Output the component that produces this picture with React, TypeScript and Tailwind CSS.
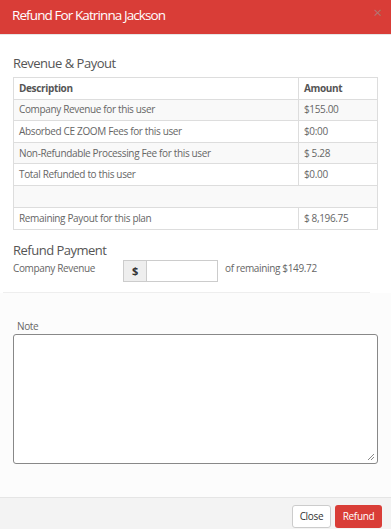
import React from 'react';

const rows: { label: string; amount: string; span?: boolean }[] = [
  { label: 'Company Revenue for this user', amount: '$155.00' },
  { label: 'Absorbed CE ZOOM Fees for this user', amount: '$0:00' },
  { label: 'Non-Refundable Processing Fee for this user', amount: '$ 5.28' },
  { label: 'Total Refunded to this user', amount: '$0.00' },
  { label: '', amount: '', span: true },
  { label: 'Remaining Payout for this plan', amount: '$ 8,196.75' },
];

export default function App() {
  return (
    <div className="w-[391px] h-[529px] flex flex-col bg-white overflow-hidden" style={{ fontFamily: '"Open Sans", sans-serif' }}>
      {/* Header */}
      <div className="h-[35px] shrink-0 flex items-center justify-between pl-3 pr-[9px] bg-[#d93d37] border-b border-[#e6e6e6]">
        <span className="text-[13.5px] text-white tracking-[-0.9px] -mt-[3px]">Refund For Katrinna Jackson</span>
        <span className="text-[15px] leading-none text-[#b07673] -mt-[10px]">×</span>
      </div>

      {/* Body */}
      <div className="px-[13px] pt-[19px] bg-white">
        <h2 className="text-[13px] text-[#555] leading-[18px] mb-[5px] tracking-[-0.5px]">Revenue &amp; Payout</h2>
        <div className="border border-[#dddddd] text-[10px] tracking-[-0.35px] text-[#666]">
          <div className="flex h-[21.6px] border-b border-[#dddddd] font-bold text-[#555]">
            <div className="flex-1 flex items-center px-[5px] border-r border-[#dddddd]">Description</div>
            <div className="w-[78px] flex items-center px-[5px]">Amount</div>
          </div>
          {rows.map((r, i) => (
            <div
              key={i}
              className={`flex h-[21.6px] ${i < rows.length - 1 ? 'border-b border-[#dddddd]' : ''} ${i % 2 === 0 ? 'bg-[#f9f9f9]' : 'bg-white'}`}
            >
              {r.span ? (
                <div className="flex-1" />
              ) : (
                <>
                  <div className="flex-1 flex items-center px-[5px] border-r border-[#dddddd]">{r.label}</div>
                  <div className="w-[78px] flex items-center px-[5px]">{r.amount}</div>
                </>
              )}
            </div>
          ))}
        </div>

        <h2 className="text-[13px] text-[#555] leading-[18px] mt-[11px] tracking-[-0.5px]">Refund Payment</h2>
        <div className="flex items-center h-[22px] mt-[1px] text-[10px] tracking-[-0.35px] text-[#666]">
          <span className="w-[110px] -mt-[6px]">Company Revenue</span>
          <span className="w-[24px] h-[22px] flex items-center justify-center bg-[#eeeeee] border border-[#cccccc] font-bold text-[#333] text-[11px]">$</span>
          <span className="w-[71px] h-[22px] bg-white border border-l-0 border-[#cccccc]" />
          <span className="ml-[7px] -mt-[6px]">of remaining $149.72</span>
        </div>
      </div>

      <div className="mt-[10px] mx-[3px] w-[367px] border-t border-[#eeeeee]" />

      <div className="flex-1 bg-[#fcfcfc] px-[13px] pt-[27px]">
        <div className="text-[10px] tracking-[-0.35px] text-[#666] pl-[4px] leading-[13px] mb-[1px]">Note</div>
        <div className="h-[130px] rounded-[3px] border border-[#888888] bg-white relative">
          <svg className="absolute right-[2px] bottom-[2px]" width="8" height="8" viewBox="0 0 8 8">
            <path d="M7 1 L1 7 M7 4 L4 7" stroke="#888" strokeWidth="1" fill="none" />
          </svg>
        </div>
      </div>

      {/* Footer */}
      <div className="h-[32px] shrink-0 border-t border-[#e5e5e5] bg-[#f3f3f3] flex items-start justify-end gap-[4px] pr-[9px] pt-[7px]">
        <button className="w-[39px] h-[23px] rounded-[3px] border border-[#cccccc] bg-white text-[10px] tracking-[-0.3px] text-[#333]">Close</button>
        <button className="w-[47px] h-[23px] rounded-[3px] bg-[#d93d37] text-[10px] tracking-[-0.3px] text-white">Refund</button>
      </div>
    </div>
  );
}
